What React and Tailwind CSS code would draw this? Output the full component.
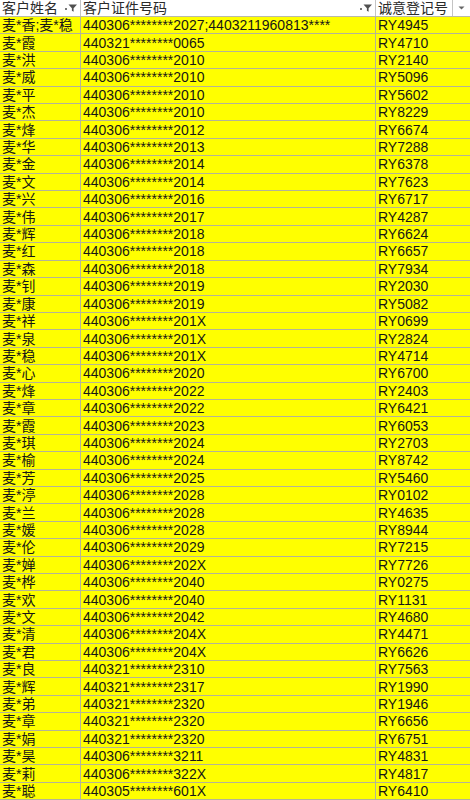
import React from "react";

const rows = [
  ["麦*香;麦*稳", "440306********2027;4403211960813****", "RY4945"],
  ["麦*霞", "440321********0065", "RY4710"],
  ["麦*洪", "440306********2010", "RY2140"],
  ["麦*威", "440306********2010", "RY5096"],
  ["麦*平", "440306********2010", "RY5602"],
  ["麦*杰", "440306********2010", "RY8229"],
  ["麦*烽", "440306********2012", "RY6674"],
  ["麦*华", "440306********2013", "RY7288"],
  ["麦*金", "440306********2014", "RY6378"],
  ["麦*文", "440306********2014", "RY7623"],
  ["麦*兴", "440306********2016", "RY6717"],
  ["麦*伟", "440306********2017", "RY4287"],
  ["麦*辉", "440306********2018", "RY6624"],
  ["麦*红", "440306********2018", "RY6657"],
  ["麦*森", "440306********2018", "RY7934"],
  ["麦*钊", "440306********2019", "RY2030"],
  ["麦*康", "440306********2019", "RY5082"],
  ["麦*祥", "440306********201X", "RY0699"],
  ["麦*泉", "440306********201X", "RY2824"],
  ["麦*稳", "440306********201X", "RY4714"],
  ["麦*心", "440306********2020", "RY6700"],
  ["麦*烽", "440306********2022", "RY2403"],
  ["麦*章", "440306********2022", "RY6421"],
  ["麦*霞", "440306********2023", "RY6053"],
  ["麦*琪", "440306********2024", "RY2703"],
  ["麦*榆", "440306********2024", "RY8742"],
  ["麦*芳", "440306********2025", "RY5460"],
  ["麦*渟", "440306********2028", "RY0102"],
  ["麦*兰", "440306********2028", "RY4635"],
  ["麦*媛", "440306********2028", "RY8944"],
  ["麦*伦", "440306********2029", "RY7215"],
  ["麦*婵", "440306********202X", "RY7726"],
  ["麦*桦", "440306********2040", "RY0275"],
  ["麦*欢", "440306********2040", "RY1131"],
  ["麦*文", "440306********2042", "RY4680"],
  ["麦*清", "440306********204X", "RY4471"],
  ["麦*君", "440306********204X", "RY6626"],
  ["麦*良", "440321********2310", "RY7563"],
  ["麦*辉", "440321********2317", "RY1990"],
  ["麦*弟", "440321********2320", "RY1946"],
  ["麦*章", "440321********2320", "RY6656"],
  ["麦*娟", "440321********2320", "RY6751"],
  ["麦*昊", "440306********3211", "RY4831"],
  ["麦*莉", "440306********322X", "RY4817"],
  ["麦*聪", "440305********601X", "RY6410"],
];

function FilterIcon() {
  return (
    <svg width="14" height="12" viewBox="0 0 14 12" className="shrink-0">
      <rect x="1" y="6" width="2" height="2" fill="#777" />
      <path d="M4.5 2.5 L13 2.5 L9.6 6.3 L9.6 9.8 L7.9 8.8 L7.9 6.3 Z" fill="#505050" />
    </svg>
  );
}

function DropIcon() {
  return (
    <svg width="7" height="4" viewBox="0 0 7 4">
      <path d="M0.5 0.5 L6.5 0.5 L3.5 3.5 Z" fill="#666" />
    </svg>
  );
}

export default function App() {
  return (
    <div
      className="w-[470px] h-[800px] overflow-hidden bg-[#ffff00] text-[14px] text-[#161616]"
      style={{ fontFamily: '"Liberation Sans", "Noto Sans CJK SC", Arial, sans-serif' }}
    >
      <div className="flex h-[17px] bg-white border-b border-[#b9b9a8] text-[#2a2a2a]">
        <div className="w-[81px] shrink-0 flex items-center justify-between border-r border-[#c4c4c4] pl-[2px] pr-[2px]">
          <span className="leading-[16px] whitespace-nowrap">客户姓名</span>
          <FilterIcon />
        </div>
        <div className="w-[295px] shrink-0 flex items-center justify-between border-r border-[#c4c4c4] pl-[2px] pr-[2px]">
          <span className="leading-[16px] whitespace-nowrap">客户证件号码</span>
          <FilterIcon />
        </div>
        <div className="flex-1 flex items-center justify-between pl-[2px]">
          <span className="leading-[16px] whitespace-nowrap">诚意登记号</span>
          <div className="w-[18px] h-full flex items-center justify-center border-l border-[#c4c4c4]">
            <DropIcon />
          </div>
        </div>
      </div>
      {rows.map((r, i) => (
        <div key={i} className="flex h-[17.42px] border-b border-[#b4b496]">
          <div className="w-[81px] shrink-0 flex items-center border-r border-[#b4b496] pl-[2px] overflow-hidden">
            <span className="leading-[16px] whitespace-nowrap">{r[0]}</span>
          </div>
          <div className="w-[295px] shrink-0 flex items-center border-r border-[#b4b496] pl-[2px] overflow-hidden">
            <span className="leading-[16px] whitespace-nowrap">{r[1]}</span>
          </div>
          <div className="flex-1 flex items-center pl-[2px]">
            <span className="leading-[16px] whitespace-nowrap">{r[2]}</span>
          </div>
        </div>
      ))}
    </div>
  );
}
